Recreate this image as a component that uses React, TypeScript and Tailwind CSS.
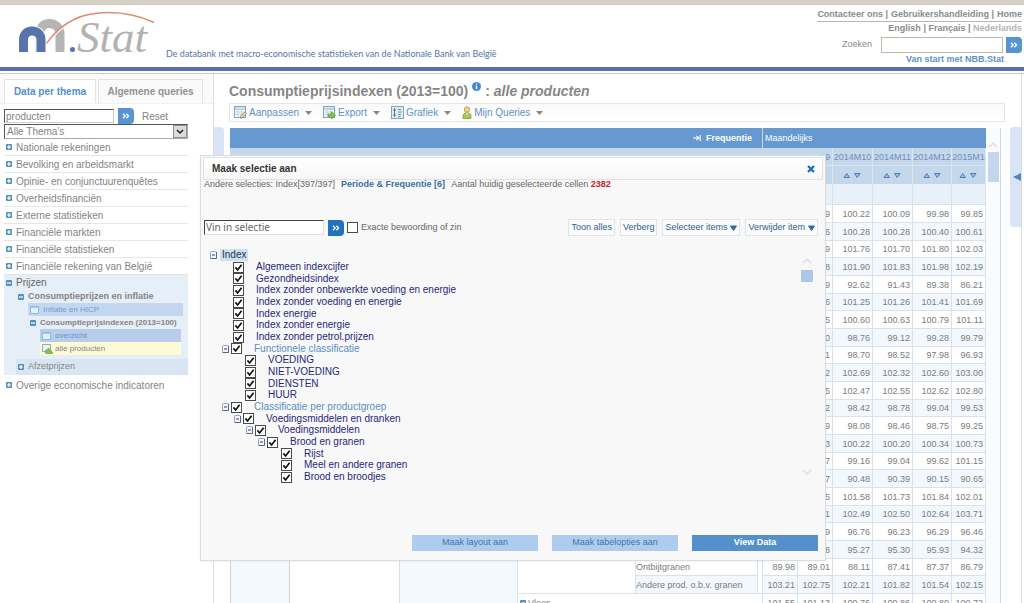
import { useState } from "react";
import type { ReactNode } from "react";

const themes = [
  "Nationale rekeningen",
  "Bevolking en arbeidsmarkt",
  "Opinie- en conjunctuurenquêtes",
  "Overheidsfinanciën",
  "Externe statistieken",
  "Financiële markten",
  "Financiële statistieken",
  "Financiële rekening van België",
];

type Node = { label: string; pad: string; parent?: boolean; light?: boolean };

const nodes: Node[] = [
  { label: "Algemeen indexcijfer", pad: "pl-[29px]" },
  { label: "Gezondheidsindex", pad: "pl-[29px]" },
  { label: "Index zonder onbewerkte voeding en energie", pad: "pl-[29px]" },
  { label: "Index zonder voeding en energie", pad: "pl-[29px]" },
  { label: "Index energie", pad: "pl-[29px]" },
  { label: "Index zonder energie", pad: "pl-[29px]" },
  { label: "Index zonder petrol.prijzen", pad: "pl-[29px]" },
  { label: "Functionele classificatie", pad: "pl-[18px]", parent: true, light: true },
  { label: "VOEDING", pad: "pl-[41px]" },
  { label: "NIET-VOEDING", pad: "pl-[41px]" },
  { label: "DIENSTEN", pad: "pl-[41px]" },
  { label: "HUUR", pad: "pl-[41px]" },
  { label: "Classificatie per productgroep", pad: "pl-[18px]", parent: true, light: true },
  { label: "Voedingsmiddelen en dranken", pad: "pl-[30px]", parent: true },
  { label: "Voedingsmiddelen", pad: "pl-[42px]", parent: true },
  { label: "Brood en granen", pad: "pl-[54px]", parent: true },
  { label: "Rijst", pad: "pl-[77px]" },
  { label: "Meel en andere granen", pad: "pl-[77px]" },
  { label: "Brood en broodjes", pad: "pl-[77px]" },
];

const rows = [
  ["", "9", "100.22", "100.09", "99.98", "99.85"],
  ["", "6", "100.28", "100.28", "100.40", "100.61"],
  ["", "9", "101.76", "101.70", "101.80", "102.03"],
  ["", "8", "101.90", "101.83", "101.98", "102.19"],
  ["", "9", "92.62", "91.43", "89.38", "86.21"],
  ["", "6", "101.25", "101.26", "101.41", "101.69"],
  ["", "5", "100.60", "100.63", "100.79", "101.11"],
  ["", "0", "98.76", "99.12", "99.28", "99.79"],
  ["", "1", "98.70", "98.52", "97.98", "96.93"],
  ["", "2", "102.69", "102.32", "102.60", "103.00"],
  ["", "5", "102.47", "102.55", "102.62", "102.80"],
  ["", "2", "98.42", "98.78", "99.04", "99.53"],
  ["", "9", "98.08", "98.46", "98.75", "99.25"],
  ["", "3", "100.22", "100.20", "100.34", "100.73"],
  ["", "7", "99.16", "99.04", "99.62", "101.15"],
  ["", "7", "90.48", "90.39", "90.15", "90.65"],
  ["", "5", "101.58", "101.73", "101.84", "102.01"],
  ["", "1", "102.49", "102.50", "102.64", "103.71"],
  ["", "9", "96.76", "96.23", "96.29", "96.46"],
  ["", "8", "95.27", "95.30", "95.93", "94.32"],
  ["89.98", "89.01", "88.11", "87.41", "87.37", "86.79"],
  ["103.21", "102.75", "102.21", "101.82", "101.54", "102.15"],
  ["101.55", "101.13", "100.76", "100.86", "100.89", "100.72"],
];

const Toggle = ({ open = false }: { open?: boolean }) => (
  <svg width="6" height="6" viewBox="0 0 6 6" className="shrink-0">
    <rect width="6" height="6" rx="1" fill="#5590b8" />
    <path d={open ? "M1 3h4" : "M1 3h4M3 1v4"} stroke="#fff" strokeWidth="1.2" />
  </svg>
);

const Minus = () => (
  <svg width="7" height="8" viewBox="0 0 7 8" className="shrink-0">
    <rect x=".5" y=".5" width="6" height="7" rx="1" fill="#f4f6fa" stroke="#97a0b8" />
    <path d="M6.5 1v6.5h-6" fill="none" stroke="#5a6488" />
    <path d="M2 4h3" stroke="#2b3d78" />
  </svg>
);

const Check = ({ id, checked = false }: { id: string; checked?: boolean }) => {
  const [on, setOn] = useState(checked);
  return (
    <span className="relative block size-[11px] shrink-0">
      <input
        id={id}
        type="checkbox"
        checked={on}
        onChange={() => setOn(!on)}
        className="block size-[11px] appearance-none border border-[#4a4a4a] bg-white"
      />
      {on && (
        <svg viewBox="0 0 11 11" className="pointer-events-none absolute inset-0 size-[11px]">
          <path d="M2.4 5.4 4.6 8l4-5.3" fill="none" stroke="#111" strokeWidth="1.7" />
        </svg>
      )}
    </span>
  );
};

const GoButton = ({ label, dark = false }: { label: string; dark?: boolean }) => (
  <button
    type="button"
    aria-label={label}
    className={`flex size-4 shrink-0 items-center justify-center rounded-r-[4px] ${dark ? "bg-[#2273be]" : "bg-[#5694d2]"}`}
  >
    <svg width="8" height="6" viewBox="0 0 8 6">
      <path d="M1 .7 3.2 3 1 5.3M4.4.7 6.6 3 4.4 5.3" fill="none" stroke="#fff" strokeWidth="1.3" />
    </svg>
  </button>
);

const Caret = () => (
  <svg width="7" height="4" viewBox="0 0 7 4">
    <path d="M0 0h7L3.5 4z" fill="#888" />
  </svg>
);

const SheetIcon = ({ children }: { children?: ReactNode }) => (
  <svg width="13" height="13" viewBox="0 0 13 13">
    <rect x=".5" y=".5" width="11" height="11" fill="#f4fafd" stroke="#7fa6c0" />
    <path d="M1 1.5h10v2H1z" fill="#b9d8ea" />
    <path d="M1 3.5h10M1 6h10M1 8.5h10M4 3v8.5M7.5 3v8.5" stroke="#b4cbd8" strokeWidth=".7" />
    {children}
  </svg>
);

const PersonIcon = () => (
  <svg width="10" height="13" viewBox="0 0 10 13">
    <path d="M1 12.5V9.6C1 8 2.4 7 5 7s4 1 4 2.6v2.9z" fill="#a5cb4f" stroke="#7ba036" strokeWidth=".8" />
    <circle cx="5" cy="3.6" r="2.7" fill="#f2d491" stroke="#b98f48" strokeWidth=".9" />
    <path d="M3.6 7.4 5 9l1.4-1.6" fill="#fff" />
  </svg>
);

const ChartIcon = () => (
  <svg width="13" height="13" viewBox="0 0 13 13">
    <rect x=".5" y=".5" width="12" height="12" fill="#e3eef5" stroke="#7fa6c0" />
    <path d="M3.5 11V2M2 4h3M2 9h3" stroke="#5c7c92" />
    <path d="M7 3.5h3M7 6h4M7 8.5h3M7 10.7h2.5" stroke="#6f8fa5" />
  </svg>
);

const PageIcon = () => (
  <svg width="9" height="8" viewBox="0 0 9 8" className="shrink-0">
    <rect x=".5" y=".5" width="8" height="7" fill="#e3f0fb" stroke="#8dbbe6" />
    <path d="M1 1.5h7" stroke="#a6cdf0" />
  </svg>
);

const tools = [
  {
    label: "Aanpassen",
    icon: (
      <SheetIcon>
        <path d="M6.3 12.3 7 9.8l3.8-3.9 1.7 1.7-3.8 3.9z" fill="#f3d49a" stroke="#8f7d68" strokeWidth=".8" />
      </SheetIcon>
    ),
  },
  {
    label: "Export",
    icon: (
      <SheetIcon>
        <path d="M5 8h3.5V5.8L12.6 9.4 8.5 13v-2.2H5z" fill="#86c34a" stroke="#5c9a2c" strokeWidth=".7" />
      </SheetIcon>
    ),
  },
  { label: "Grafiek", icon: <ChartIcon /> },
  { label: "Mijn Queries", icon: <PersonIcon /> },
];

const Logo = () => (
  <svg width="140" height="56" viewBox="0 0 140 56" role="img" aria-label="m.Stat">
    <path d="M22 43V24c0-6 4-9.500 9.500-9.500S42 18.500 42 25v18" fill="none" stroke="#b5b5b5" strokeWidth="9" />
    <path d="M28 36C45 12 66 4.500 90 4.500c18 0 33 4 46 10" fill="none" stroke="#fff" strokeWidth="2" />
    <path d="M28 35C45 11 66 3.500 90 3.500c18 0 33 4 46 10" fill="none" stroke="#d98c70" strokeWidth="1.400" />
    <path d="M5.500 43V31c0-5.500 3-9 8.500-9s9 3.500 9 9v12" fill="none" stroke="#fff" strokeWidth="11" />
    <path d="M5.500 43V31c0-5.500 3-9 8.500-9s9 3.500 9 9v12" fill="none" stroke="#5874ac" strokeWidth="9" />
    <circle cx="54.500" cy="40.500" r="2.500" fill="#5874ac" />
    <text x="59" y="43" fontFamily="Liberation Serif, serif" fontStyle="italic" fontSize="45" fill="#b2b2b2">
      Stat
    </text>
  </svg>
);

const Header = () => (
  <header className="border-t-[5px] border-[#d6d1c6]">
    <div className="flex h-[62px] justify-between pl-[18px]">
      <div className="flex items-start gap-2 pt-1">
        <Logo />
        <p className="pt-[38px] font-['Lato',sans-serif] text-[9px] leading-[14px] text-[#5874a4]">
          De databank met macro-economische statistieken van de Nationale Bank van België
        </p>
      </div>
      <div className="flex flex-col items-end pr-[2px] text-[9px] font-bold text-[#8a8a8a]">
        <nav className="flex gap-[3px] border-b border-[#b5b5b5] pt-[3px] leading-[13px]">
          <span><a href="#contact">Contacteer ons</a> |</span>
          <span><a href="#handleiding">Gebruikershandleiding</a> |</span>
          <a href="#home">Home</a>
        </nav>
        <p className="leading-[12px]">
          <a href="#en">English</a> | <a href="#fr">Français</a> | <a href="#nl" className="text-[#b4b4b4]">Nederlands</a>
        </p>
        <form className="mt-[3px] flex items-center gap-[3px] font-normal" onSubmit={(e) => e.preventDefault()}>
          <label htmlFor="zoeken" className="pr-[6px]">Zoeken</label>
          <input id="zoeken" className="h-4 w-[122px] border border-[#c4b8a8] bg-white px-1" />
          <GoButton label="Zoeken" />
        </form>
        <a href="#start" className="pr-[18px] leading-[12px] text-[#5a92cc]">Van start met NBB.Stat</a>
      </div>
    </div>
    <div className="mb-[2px] h-1 bg-[#5b6fa6]" />
    <div className="h-px bg-[#c9c9d6]" />
  </header>
);

const Sidebar = () => (
  <aside className="w-[214px] shrink-0 border-r border-[#dfdfdf] text-[10px] text-[#848484]">
    <div className="flex gap-[2px] border-b border-[#f2f2f2] bg-[#fafafa] pt-[5px] pl-1 font-bold">
      <button type="button" className="h-6 w-[92px] border border-b-0 border-[#e4e4e4] bg-white text-[#4f8fd0]">
        Data per thema
      </button>
      <button type="button" className="h-6 w-[105px] border border-b-0 border-[#e4e4e4] bg-[#fafafa] text-[#929292]">
        Algemene queries
      </button>
    </div>
    <form className="w-[188px] pt-1 pl-1" onSubmit={(e) => e.preventDefault()}>
      <div className="flex items-center">
        <input
          aria-label="Zoek thema"
          defaultValue="producten"
          className="mr-1 h-[14px] w-[110px] border border-t-[#555] border-l-[#555] border-r-[#ccc] border-b-[#ccc] bg-white px-[1px]"
        />
        <GoButton label="Zoek" />
        <button type="reset" className="ml-2">Reset</button>
      </div>
      <div className="relative">
        <select
          aria-label="Thema"
          className="block h-[15px] w-full appearance-none border border-t-[#555] border-l-[#555] border-r-[#aaa] border-b-[#aaa] bg-white px-[2px] leading-[12px]"
        >
          <option>Alle Thema's</option>
        </select>
        <svg viewBox="0 0 14 13" className="pointer-events-none absolute top-px right-px h-[13px] w-[14px]">
          <rect x=".5" y=".5" width="13" height="12" fill="#dcdcdc" stroke="#909090" />
          <path d="m4 5 3 3 3-3" fill="none" stroke="#222" strokeWidth="1.500" />
        </svg>
      </div>
    </form>
    <ul className="ml-1 w-[184px]">
      {themes.map((theme) => (
        <li key={theme} className="flex h-[17px] items-center gap-1 border-b border-[#e6e6e6] pl-[2px]">
          <Toggle />
          <a href="#thema">{theme}</a>
        </li>
      ))}
      <li className="bg-[#e6eef8]">
        <div className="flex h-[15px] items-center gap-1 pl-[2px] text-[#666]">
          <Toggle open />
          <a href="#prijzen">Prijzen</a>
        </div>
        <div className="flex h-[13px] items-center gap-1 pl-[14px] text-[9px] font-bold">
          <Toggle open />
          <a href="#inflatie">Consumptieprijzen en inflatie</a>
        </div>
        <div className="mr-[5px] ml-6 flex h-[13px] items-center gap-1 bg-[#c3d7ee] pl-[2px] text-[8px] text-[#6f9fd2]">
          <PageIcon />
          <a href="#hicp">Inflatie en HICP</a>
        </div>
        <div className="flex h-[13px] items-center gap-1 pl-[26px] text-[8px] font-bold">
          <Toggle open />
          <a href="#2013">Consumptieprijsindexen (2013=100)</a>
        </div>
        <div className="mr-[7px] ml-9 text-[8px]">
          <div className="flex h-[13px] items-center gap-1 bg-[#b7cdea] pl-[2px] text-[#6494cc]">
            <PageIcon />
            <a href="#overzicht">overzicht</a>
          </div>
          <div className="flex h-[13px] items-center gap-[2px] bg-[#fcfbd6] pl-[2px]">
            <svg width="11" height="10" viewBox="0 0 11 10" className="shrink-0">
              <rect x=".5" y=".5" width="8" height="7" fill="#edf5fa" stroke="#8ab0c8" />
              <path d="M3 8.500C3 6 5 6 6 4.500c2 0 2 2 4.500 3.500v1.500H4z" fill="#86bd4e" stroke="#5f9a30" strokeWidth=".6" />
            </svg>
            <a href="#alle">alle producten</a>
          </div>
        </div>
        <div className="mt-1 ml-3 flex h-4 items-center gap-1 bg-[#d9e5f3] pl-[2px] text-[9px]">
          <Toggle />
          <a href="#afzet">Afzetprijzen</a>
        </div>
      </li>
      <li className="flex h-5 items-center gap-1 pl-[2px]">
        <Toggle />
        <a href="#overige">Overige economische indicatoren</a>
      </li>
    </ul>
  </aside>
);

const SortArrows = () => (
  <svg width="18" height="7" viewBox="0 0 18 7" className="mx-auto">
    <path d="M1 5.500h5.500L3.800 1.500z" fill="#9cc0e4" stroke="#4a7fb8" />
    <path d="M11.500 1.500H17L14.200 5.500z" fill="#9cc0e4" stroke="#4a7fb8" />
  </svg>
);

const months = ["2014M10", "2014M11", "2014M12", "2015M1"];
const cell = "border-r border-b border-[#d8e2ec]";

const DataTable = () => (
  <table className="w-full table-fixed border-separate border-spacing-0 text-[9px] leading-[12px] text-[#7c7c7c]">
    <colgroup>
      <col className="w-[60px]" />
      <col className="w-[110px]" />
      <col className="w-[118px]" />
      <col className="w-[118px]" />
      <col />
      <col className="w-[5px]" />
      <col className="w-[35px]" />
      <col className="w-[35px]" />
      <col className="w-[40px]" />
      <col className="w-10" />
      <col className="w-[39px]" />
      <col className="w-[34px]" />
    </colgroup>
    <thead className="text-left">
      <tr className="h-[21px] bg-[#6699d0] text-white">
        <th colSpan={6} className="border-r border-b border-[#c9d9ec] pr-[10px]">
          <span className="flex items-center justify-end gap-[5px]">
            <svg width="8" height="6" viewBox="0 0 8 6">
              <path d="M0 3h6M3.500.8 5.800 3 3.500 5.200M7.200 0v6" fill="none" stroke="#fff" strokeWidth="1.100" />
            </svg>
            Frequentie
          </span>
        </th>
        <th colSpan={6} className="border-b border-[#c9d9ec] pl-[2px] font-normal">Maandelijks</th>
      </tr>
      <tr className="h-[17px] bg-[#c5d7eb] text-[#6a90b8]">
        <th colSpan={7} className="border-b border-[#d9e6f4]" />
        <th className="border-r border-b border-[#d9e6f4] pr-[2px] text-right font-normal">9</th>
        {months.map((month) => (
          <th key={month} className="border-r border-b border-[#d9e6f4] text-center font-normal">{month}</th>
        ))}
      </tr>
      <tr className="h-[18px] bg-[#c5d7eb]">
        <th colSpan={8} className="border-r border-[#d9e6f4]" />
        {months.map((month) => (
          <th key={month} aria-label={`Sorteer ${month}`} className="border-r border-[#d9e6f4]">
            <SortArrows />
          </th>
        ))}
      </tr>
      <tr className="h-[21px] bg-[#e8f0fa]">
        <th colSpan={8} className={cell} />
        {months.map((month) => (
          <th key={month} className={cell} />
        ))}
      </tr>
    </thead>
    <tbody>
      {rows.map((values, i) => (
        <tr key={i} className="h-[18px] odd:bg-white even:bg-[#f2f8fd] nth-[3n]:h-[17px]">
          {i === 0 && (
            <>
              <td rowSpan={23} className="border-x border-[#d4d4d4] bg-[#f3f9fe]" />
              <td rowSpan={23} className={cell} />
              <td rowSpan={23} className={`${cell} bg-[#f3f9fe]`} />
              <td rowSpan={22} className={cell} />
              <td rowSpan={20} className={cell} />
              <td rowSpan={22} className={cell} />
            </>
          )}
          {i === 20 && <td className={cell}>Ontbijtgranen</td>}
          {i === 21 && <td className={cell}>Andere prod. o.b.v. granen</td>}
          {i === 22 && (
            <td colSpan={3} className={`${cell} pl-[2px]`}>
              <span className="flex items-center gap-[2px]">
                <Toggle open />
                Vlees
              </span>
            </td>
          )}
          {values.map((value, j) => (
            <td key={j} className={`${cell} pr-[2px] text-right`}>{value}</td>
          ))}
        </tr>
      ))}
    </tbody>
  </table>
);

const DropButton = ({ children, arrow = false }: { children: ReactNode; arrow?: boolean }) => (
  <button
    type="button"
    className="flex h-[17px] items-center gap-[3px] border border-[#dde6ec] bg-[#fbfbfb] px-[2px] text-[#2e5f94]"
  >
    {children}
    {arrow && (
      <svg width="7" height="6" viewBox="0 0 7 6">
        <path d="M.5 1 3.500 5.500 6.500 1z" fill="#2c6ca8" stroke="#2c6ca8" />
      </svg>
    )}
  </button>
);

const Chevron = ({ up = false }: { up?: boolean }) => (
  <svg width="10" height="6" viewBox="0 0 10 6">
    <path d={up ? "M1 5 5 1l4 4" : "m1 1 4 4 4-4"} fill="none" stroke="#e2e2ea" strokeWidth="1.800" />
  </svg>
);

const SelectionDialog = () => (
  <section
    role="dialog"
    aria-label="Maak selectie aan"
    className="absolute top-[155px] right-[198px] left-[200px] border border-[#dcdcdc] bg-[#f8f8f8] px-[2px] pt-px pb-[9px] text-[9px] text-[#666] shadow-xs"
  >
    <div className="flex h-[23px] items-center justify-between border border-[#e2e2e2] bg-linear-to-b from-white to-[#f6f6f6] pr-[7px] pl-2">
      <h2 className="text-[10px] font-bold text-[#333]">Maak selectie aan</h2>
      <button type="button" aria-label="Sluiten">
        <svg width="8" height="8" viewBox="0 0 8 8">
          <path d="m1 1 6 6M7 1 1 7" stroke="#1a6cb4" strokeWidth="2.200" />
        </svg>
      </button>
    </div>
    <p className="flex gap-[6px] pl-px leading-[9px]">
      <span>Andere selecties: Index[397/397]</span>
      <a href="#periode" className="font-bold text-[#3a6ea8]">Periode &amp; Frequentie [6]</a>
      <span>Aantal huidig geselecteerde cellen <b className="text-[#c8201e]">2382</b></span>
    </p>
    <div className="mt-[30px] flex items-center justify-between pr-[5px] pl-px">
      <div className="flex items-center">
        <input
          aria-label="Vin in selectie"
          defaultValue="Vin in selectie"
          className="mr-1 h-[15px] w-[120px] border border-t-[#444] border-l-[#444] border-r-[#ddd] border-b-[#ddd] bg-white px-[1px] font-['Noto_Sans',sans-serif] text-[10px]"
        />
        <GoButton label="Zoek in selectie" dark />
        <span className="ml-[3px]">
          <Check id="exact" />
        </span>
        <label htmlFor="exact" className="ml-[3px]">Exacte bewoording of zin</label>
      </div>
      <div className="flex gap-[5px]">
        <DropButton>Toon alles</DropButton>
        <DropButton>Verberg</DropButton>
        <DropButton arrow>Selecteer items</DropButton>
        <DropButton arrow>Verwijder item</DropButton>
      </div>
    </div>
    <div className="mt-[13px] flex justify-between pr-[9px] pl-px">
      <ul className="text-[10px] leading-[12px] text-[#27277a]">
        <li className="flex h-3 items-center gap-[3px] pl-[6px]">
          <Minus />
          <span className="bg-[#cfe0ef] px-[2px] text-[#1d3457]">Index</span>
        </li>
        {nodes.map(({ label, pad, parent, light }) => (
          <li key={label} className={`flex h-3 items-center nth-[3n]:h-[11px] ${pad}`}>
            {parent && (
              <span className="mr-[2px]">
                <Minus />
              </span>
            )}
            <Check id={label} checked />
            <label htmlFor={label} className={`ml-3 ${light ? "text-[#5b8fc0]" : ""}`}>{label}</label>
          </li>
        ))}
      </ul>
      <div className="flex w-[14px] flex-col items-center gap-[6px] pt-[9px] pb-2">
        <Chevron up />
        <div className="size-3 bg-[#adc8e6]" />
        <div className="mt-auto">
          <Chevron />
        </div>
      </div>
    </div>
    <div className="mt-[52px] flex justify-end gap-[14px] pr-[5px]">
      <button type="button" className="h-4 w-[126px] bg-[#aecdee] text-[#3b74b4]">Maak layout aan</button>
      <button type="button" className="h-4 w-[126px] bg-[#aecdee] text-[#3b74b4]">Maak tabelopties aan</button>
      <button type="button" className="h-4 w-[126px] bg-[#5490cc] font-bold text-white">View Data</button>
    </div>
  </section>
);

export default function App() {
  return (
    <div className="relative flex h-screen flex-col overflow-hidden bg-white font-['Liberation_Sans',Arial,sans-serif]">
      <Header />
      <div className="flex min-h-0 flex-1">
        <Sidebar />
        <div className="mt-[53px] h-[100px] w-[10px] shrink-0 rounded-r bg-[#d9e4f7]" />
        <main className="mx-[5px] min-w-0 flex-1 pt-2">
          <h1 className="flex h-[21px] text-[14px] leading-[18px] font-bold text-[#868686]">
            Consumptieprijsindexen (2013=100)
            <svg width="9" height="9" viewBox="0 0 9 9" className="mx-1">
              <circle cx="4.500" cy="4.500" r="4.500" fill="#3f8ad6" />
              <path d="M4.500 1.500v1.300M4.500 3.800v3.500" stroke="#fff" strokeWidth="1.300" />
            </svg>
            <span>: <i>alle producten</i></span>
          </h1>
          <div className="flex h-[19px] items-center gap-[11px] border border-[#e6e6e6] bg-linear-to-b from-[#fafafa] to-white pl-1 text-[10px] text-[#5e92c8]">
            {tools.map(({ label, icon }) => (
              <button key={label} type="button" className="flex items-center gap-[2px]">
                {icon}
                <span className="pr-1">{label}</span>
                <Caret />
              </button>
            ))}
          </div>
          <div className="mt-[6px] mr-1 ml-px flex">
            <div className="min-w-0 flex-1">
              <DataTable />
            </div>
            <div className="flex w-[15px] flex-col items-center gap-1 border-r border-[#c4d8ec] bg-[#fafbfd] pt-[14px]">
              <Chevron up />
              <div className="h-[30px] w-[11px] bg-[#c3d6ec]" />
            </div>
          </div>
        </main>
        <div className="mt-[53px] flex h-[100px] w-[11px] shrink-0 items-center justify-end rounded-l bg-[#d9e4f7]">
          <svg width="8" height="8" viewBox="0 0 8 8">
            <path d="M8 0v8L0 4z" fill="#4f86c4" />
          </svg>
        </div>
        <div className="w-[3px] shrink-0 border-l border-[#dcdcdc]" />
      </div>
      <SelectionDialog />
    </div>
  );
}
